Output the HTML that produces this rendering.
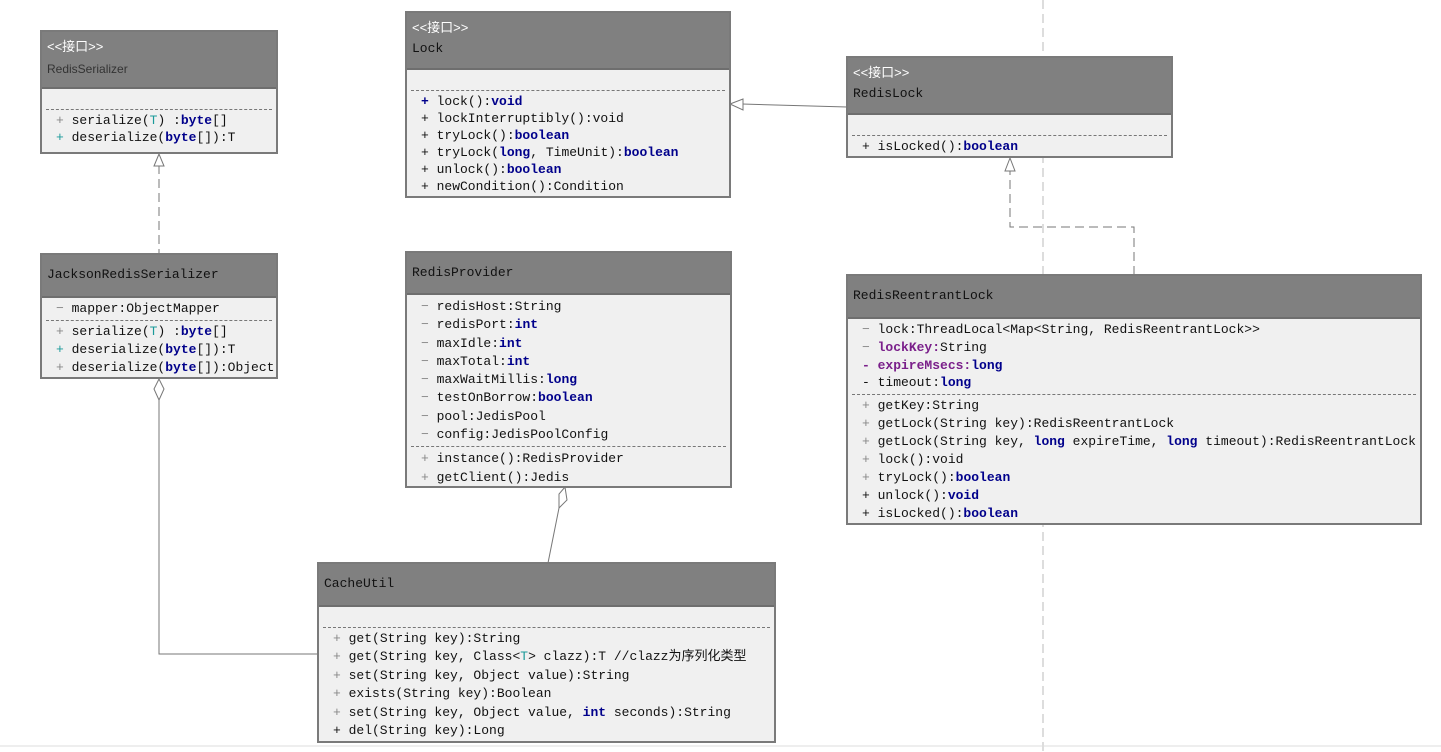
<!DOCTYPE html>
<html><head><meta charset="utf-8"><style>
body{margin:0;width:1441px;height:752px;background:#fff;position:relative;overflow:hidden;font-family:"Liberation Mono","Noto Sans CJK SC",monospace;font-size:13px;color:#111}
.b{position:absolute;border:2px solid #7a7a7a;background:#f0f0f0;box-sizing:border-box}
.h{background:#808080;border-bottom:2px solid #6e6e6e;box-sizing:border-box;padding:4px 5px;color:#111}
.h .s{color:#fff;font-family:"Liberation Sans","Noto Sans CJK SC",sans-serif;font-size:13px}
.r{white-space:nowrap;padding-left:14px}
.sep{border-top:1px dashed #777;margin:2px 4px}
.k{color:#00008b;font-weight:bold}
.t{color:#1a9a9a}
.p{color:#7a1f8a;font-weight:bold}
.g{color:#888}
svg{position:absolute;left:0;top:0}
</style></head><body>
<svg width="1441" height="752">
<line x1="1043" y1="0" x2="1043" y2="752" stroke="#bbb" stroke-dasharray="9,5"/>
<line x1="0" y1="746" x2="1441" y2="746" stroke="#ddd"/>
<line x1="159" y1="165" x2="159" y2="254" stroke="#777" stroke-dasharray="9,5"/>
<polygon points="159,154 154,166 164,166" fill="#fff" stroke="#777"/>
<line x1="742" y1="104" x2="847" y2="107" stroke="#777"/>
<polygon points="730,104 743,99 743,110" fill="#fff" stroke="#777"/>
<polyline points="1134,275 1134,227 1010,227 1010,170" fill="none" stroke="#777" stroke-dasharray="9,5"/>
<polygon points="1010,158 1005,171 1015,171" fill="#fff" stroke="#777"/>
<polyline points="159,400 159,654 318,654" fill="none" stroke="#777"/>
<polygon points="159,379 154,389 159,400 164,389" fill="#fff" stroke="#777"/>
<line x1="559" y1="508" x2="548" y2="563" stroke="#777"/>
<polygon points="565,487 559,494 559,508 567,500" fill="#fff" stroke="#777"/>
</svg>

<div class="b" style="left:40px;top:30px;width:238px;height:124px">
<div class="h" style="height:57px"><div class="s">&lt;&lt;接口&gt;&gt;</div><div style="font-family:'Liberation Sans',sans-serif;font-size:12px;color:#333;margin-top:7px">RedisSerializer</div></div>
<div style="height:18px"></div><div class="sep"></div>
<div style="line-height:17px"><div class="r"><span class="g">+</span> serialize(<span class="t">T</span>) :<span class="k">byte</span>[]</div><div class="r"><span class="t">+</span> deserialize(<span class="k">byte</span>[]):T</div></div></div>

<div class="b" style="left:405px;top:11px;width:326px;height:187px">
<div class="h" style="height:57px"><div class="s">&lt;&lt;接口&gt;&gt;</div><div style="margin-top:5px">Lock</div></div>
<div style="height:18px"></div><div class="sep"></div>
<div style="line-height:17px"><div class="r"><span class="k">+</span> lock():<span class="k">void</span></div><div class="r">+ lockInterruptibly():void</div><div class="r">+ tryLock():<span class="k">boolean</span></div><div class="r">+ tryLock(<span class="k">long</span>, TimeUnit):<span class="k">boolean</span></div><div class="r">+ unlock():<span class="k">boolean</span></div><div class="r">+ newCondition():Condition</div></div></div>

<div class="b" style="left:846px;top:56px;width:327px;height:102px">
<div class="h" style="height:57px"><div class="s">&lt;&lt;接口&gt;&gt;</div><div style="margin-top:5px">RedisLock</div></div>
<div style="height:18px"></div><div class="sep"></div>
<div style="line-height:17px"><div class="r">+ isLocked():<span class="k">boolean</span></div></div></div>

<div class="b" style="left:40px;top:253px;width:238px;height:126px">
<div class="h" style="height:43px;padding-top:12px">JacksonRedisSerializer</div>
<div style="line-height:18px;padding-top:2px"><div class="r"><span class="g">−</span> mapper:ObjectMapper</div></div><div class="sep"></div>
<div style="line-height:18px"><div class="r"><span class="g">+</span> serialize(<span class="t">T</span>) :<span class="k">byte</span>[]</div><div class="r"><span class="t">+</span> deserialize(<span class="k">byte</span>[]):T</div><div class="r"><span class="g">+</span> deserialize(<span class="k">byte</span>[]):Object</div></div></div>

<div class="b" style="left:405px;top:251px;width:327px;height:237px">
<div class="h" style="height:42px;padding-top:12px">RedisProvider</div>
<div style="line-height:18.3px;padding-top:3px">
<div class="r"><span class="g">−</span> redisHost:String</div><div class="r"><span class="g">−</span> redisPort:<span class="k">int</span></div><div class="r"><span class="g">−</span> maxIdle:<span class="k">int</span></div><div class="r"><span class="g">−</span> maxTotal:<span class="k">int</span></div><div class="r"><span class="g">−</span> maxWaitMillis:<span class="k">long</span></div><div class="r"><span class="g">−</span> testOnBorrow:<span class="k">boolean</span></div><div class="r"><span class="g">−</span> pool:JedisPool</div><div class="r"><span class="g">−</span> config:JedisPoolConfig</div></div><div class="sep"></div>
<div style="line-height:19px"><div class="r"><span class="g">+</span> instance():RedisProvider</div><div class="r"><span class="g">+</span> getClient():Jedis</div></div></div>

<div class="b" style="left:846px;top:274px;width:576px;height:251px">
<div class="h" style="height:43px;padding-top:12px">RedisReentrantLock</div>
<div style="line-height:17.8px;padding-top:2px">
<div class="r"><span class="g">−</span> lock:ThreadLocal&lt;Map&lt;String, RedisReentrantLock&gt;&gt;</div><div class="r"><span class="g">−</span> <span class="p">lockKey:</span>String</div><div class="r"><span class="p">- expireMsecs:</span><span class="k">long</span></div><div class="r">- timeout:<span class="k">long</span></div></div><div class="sep"></div>
<div style="line-height:18px"><div class="r"><span class="g">+</span> getKey:String</div><div class="r"><span class="g">+</span> getLock(String key):RedisReentrantLock</div><div class="r"><span class="g">+</span> getLock(String key, <span class="k">long</span> expireTime, <span class="k">long</span> timeout):RedisReentrantLock</div><div class="r"><span class="g">+</span> lock():void</div><div class="r"><span class="g">+</span> tryLock():<span class="k">boolean</span></div><div class="r">+ unlock():<span class="k">void</span></div><div class="r">+ isLocked():<span class="k">boolean</span></div></div></div>

<div class="b" style="left:317px;top:562px;width:459px;height:181px">
<div class="h" style="height:43px;padding-top:12px">CacheUtil</div>
<div style="height:18px"></div><div class="sep"></div>
<div style="line-height:18.4px"><div class="r"><span class="g">+</span> get(String key):String</div><div class="r"><span class="g">+</span> get(String key, Class&lt;<span class="t">T</span>&gt; clazz):T //clazz为序列化类型</div><div class="r"><span class="g">+</span> set(String key, Object value):String</div><div class="r"><span class="g">+</span> exists(String key):Boolean</div><div class="r"><span class="g">+</span> set(String key, Object value, <span class="k">int</span> seconds):String</div><div class="r">+ del(String key):Long</div></div></div>
</body></html>
